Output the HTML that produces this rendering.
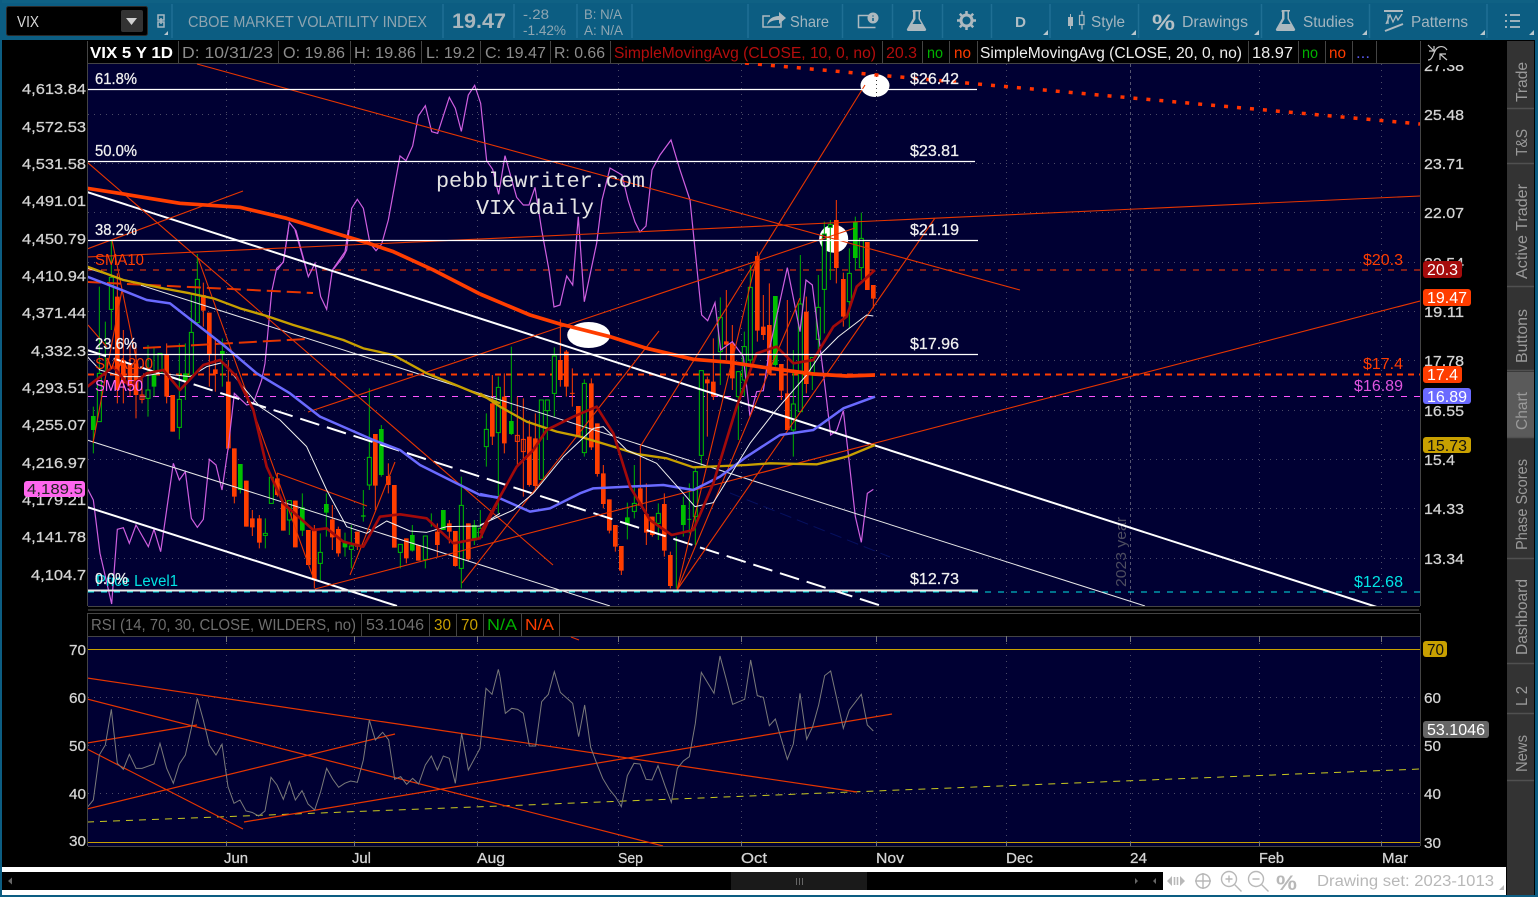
<!DOCTYPE html>
<html lang="en"><head><meta charset="utf-8"><title>VIX chart</title>
<style>
html,body{margin:0;padding:0;background:#000;width:1538px;height:897px;overflow:hidden}
svg{display:block}
text{font-family:"Liberation Sans",sans-serif;font-size:15px}
.ax{fill:#d4d4d4;stroke:#d4d4d4;stroke-width:.25px}
.tb{fill:#a3b5bf;font-size:16px}
.tn{fill:#8fa6b2;font-size:14px}
.hd{fill:#8c8c8c;font-size:15.5px}
.fb{fill:#f0f0f0;font-size:15.5px;stroke:#f0f0f0;stroke-width:.25px}
.tab{fill:#9a9a9a;font-size:15.5px}
.tag{fill:#fff;font-size:15.5px}
.icf{fill:#adb9bf}
.ics{fill:none;stroke:#adb9bf;stroke-width:1.5}
.sep{stroke:#1f6f94;stroke-width:1.5}
.hs{stroke:#444;stroke-width:1}
.tri{fill:#b8c6cd}
</style></head><body>
<svg width="1538" height="897" viewBox="0 0 1538 897" xmlns="http://www.w3.org/2000/svg">
<defs><clipPath id="c1"><rect x="88" y="63" width="1332" height="543"/></clipPath>
<clipPath id="c2"><rect x="88" y="636" width="1332" height="210"/></clipPath>
<clipPath id="c3"><rect x="1421" y="65" width="85" height="20"/></clipPath></defs>
<rect width="1538" height="897" fill="#000"/>
<rect width="1538" height="40" fill="#0c5d82"/>
<rect width="1538" height="3" fill="#0f6184"/>
<rect x="0" y="0" width="2" height="897" fill="#0c5d82"/>
<rect x="1535" y="0" width="3" height="897" fill="#0c5d82"/>
<rect x="0" y="895" width="1538" height="2" fill="#0c5d82"/>

<!-- toolbar -->
<rect x="6.5" y="6.5" width="141" height="29" rx="2" fill="#000" stroke="#2a2a2a"/>
<text x="17" y="27" fill="#d8d8d8" textLength="22" lengthAdjust="spacingAndGlyphs" style="font-size:15.5px">VIX</text>
<rect x="121" y="10" width="22" height="22" rx="2" fill="#333"/>
<path d="M126 18h11l-5.500 7z" fill="#d0d0d0"/>
<path d="M158 15h6v5h-6zM158 22h6v5h-6z" fill="none" stroke="#a7b8c1" stroke-width="1.500"/>
<path d="M161 18v6" stroke="#a7b8c1" stroke-width="1.500"/>
<path d="M168 35h-4l4-4z" class="tri"/>
<path class="sep" d="M172 4V38M443 4V38M514 4V38M577 4V38M632 4V38M748 4V38M842.500 4V38M892.500 4V38M942.500 4V38M991.500 4V38M1050 4V38M1138.500 4V38M1261.500 4V38M1369.500 4V38M1487 4V38"/>
<text x="188" y="27" class="tb" textLength="239" lengthAdjust="spacingAndGlyphs" style="fill:#8ea4b0">CBOE MARKET VOLATILITY INDEX</text>
<text x="452" y="28" textLength="54" lengthAdjust="spacingAndGlyphs" style="fill:#a9b6bd;font-size:21px;font-weight:bold">19.47</text>
<text x="523" y="19" class="tn" textLength="26" lengthAdjust="spacingAndGlyphs">-.28</text>
<text x="523" y="35" class="tn" textLength="43" lengthAdjust="spacingAndGlyphs">-1.42%</text>
<text x="584" y="19" class="tn" textLength="38" lengthAdjust="spacingAndGlyphs">B: N/A</text>
<text x="584" y="35" class="tn" textLength="39" lengthAdjust="spacingAndGlyphs">A: N/A</text>
<!-- share -->
<path class="ics" d="M770 16h-7v11h18v-6"/>
<path class="icf" d="M767 25c1-6 6-9 12-9v-4l7 6-7 6v-4c-5 0-9 1-12 5z"/>
<text x="790" y="27" class="tb" textLength="39" lengthAdjust="spacingAndGlyphs">Share</text>
<!-- notebook -->
<path class="ics" d="M875 27.500h-16.500v-12h12M858.500 27.500h17"/>
<circle cx="873" cy="18" r="5.500" class="icf"/><path d="M873 15.500v1M873 18v3" stroke="#0c5d82" stroke-width="1.500"/>
<!-- flask -->
<path class="icf" d="M913 10h8v1.500h-1v7l6 10.500c.5 1-.3 2-1.500 2h-16c-1.200 0-2-1-1.500-2l6-10.500v-7h-1z"/>
<path d="M915.500 11.500h3v7.500l3 5h-9l3-5z" fill="#0c5d82"/>
<!-- gear -->
<circle cx="966.500" cy="20.500" r="5.500" fill="none" stroke="#adb9bf" stroke-width="3"/>
<path class="ics" d="M966.500 11v4M966.500 26v4M957 20.500h4M972 20.500h4M959.800 13.800l2.800 2.800M970.400 24.400l2.800 2.800M959.800 27.200l2.800-2.800M970.400 16.600l2.800-2.800" style="stroke-width:2.500"/>
<text x="1015" y="27" textLength="11" lengthAdjust="spacingAndGlyphs" style="fill:#b0bdc4;font-size:15px;font-weight:bold">D</text>
<!-- style -->
<path class="icf" d="M1068 17h5v9h-5zM1070 14h1v15h-1z"/>
<path class="ics" d="M1079.500 15.500h4.500v9h-4.500zM1082 11v4M1082 24.500v5" style="stroke-width:1.200"/>
<text x="1091" y="27" class="tb" textLength="34" lengthAdjust="spacingAndGlyphs">Style</text>
<!-- % -->
<text x="1152" y="30" textLength="23" lengthAdjust="spacingAndGlyphs" style="fill:#b6c0c5;font-size:22px;font-weight:bold">%</text>
<text x="1182" y="27" class="tb" textLength="66" lengthAdjust="spacingAndGlyphs">Drawings</text>
<!-- flask 2 -->
<path class="icf" d="M1282 10h8v1.500h-1v7l6 10.500c.5 1-.3 2-1.500 2h-16c-1.200 0-2-1-1.500-2l6-10.500v-7h-1z"/>
<path d="M1284.500 11.500h3v7.500l3 5h-9l3-5z" fill="#0c5d82"/>
<text x="1303" y="27" class="tb" textLength="51" lengthAdjust="spacingAndGlyphs">Studies</text>
<!-- patterns -->
<path class="ics" d="M1384 11h19M1385 31l18-7" style="stroke-width:2"/>
<path class="ics" d="M1386 24l4-9 3 7 3-6 2 4 4-6M1388 14v10" style="stroke-width:1.300"/>
<text x="1411" y="27" class="tb" textLength="57" lengthAdjust="spacingAndGlyphs">Patterns</text>
<!-- list -->
<path d="M1505 15h2M1505 21h2M1505 27h2M1510 15h10M1510 21h10M1510 27h10" stroke="#b0bdc4" stroke-width="1.800"/>
<path class="tri" d="M1048 35h-5l5-5zM1136 35h-5l5-5zM1259 35h-5l5-5zM1367 35h-5l5-5zM1485 35h-5l5-5zM1534 35h-5l5-5z"/>

<!-- chart header -->
<path class="hs" d="M88 63.500H1420M87.500 41V606M178.500 41V63M278.500 41V63M350.500 41V63M421.500 41V63M480.500 41V63M550.500 41V63M610.500 41V63M882.500 41V63M922.500 41V63M949.500 41V63M977.500 41V63M1248.500 41V63M1298.500 41V63M1325.500 41V63M1352.500 41V63M1376.500 41V63M1420.500 41V606M88 606.500H1420"/>
<text x="90" y="58" textLength="83" lengthAdjust="spacingAndGlyphs" style="fill:#fff;font-size:15.500px;font-weight:bold">VIX 5 Y 1D</text>
<text x="182" y="58" class="hd" textLength="91" lengthAdjust="spacingAndGlyphs">D: 10/31/23</text>
<text x="283" y="58" class="hd" textLength="62" lengthAdjust="spacingAndGlyphs">O: 19.86</text>
<text x="354" y="58" class="hd" textLength="62" lengthAdjust="spacingAndGlyphs">H: 19.86</text>
<text x="426" y="58" class="hd" textLength="49" lengthAdjust="spacingAndGlyphs">L: 19.2</text>
<text x="485" y="58" class="hd" textLength="61" lengthAdjust="spacingAndGlyphs">C: 19.47</text>
<text x="554" y="58" class="hd" textLength="51" lengthAdjust="spacingAndGlyphs">R: 0.66</text>
<text x="614" y="58" class="hd" textLength="262" lengthAdjust="spacingAndGlyphs" style="fill:#b30d0d">SimpleMovingAvg (CLOSE, 10, 0, no)</text>
<text x="886" y="58" class="hd" textLength="31" lengthAdjust="spacingAndGlyphs" style="fill:#b30d0d">20.3</text>
<text x="927" y="58" class="hd" textLength="16" lengthAdjust="spacingAndGlyphs" style="fill:#00b000">no</text>
<text x="954" y="58" class="hd" textLength="17" lengthAdjust="spacingAndGlyphs" style="fill:#ff3d00">no</text>
<text x="980" y="58" class="hd" textLength="262" lengthAdjust="spacingAndGlyphs" style="fill:#eee">SimpleMovingAvg (CLOSE, 20, 0, no)</text>
<text x="1252" y="58" class="hd" textLength="41" lengthAdjust="spacingAndGlyphs" style="fill:#eee">18.97</text>
<text x="1302" y="58" class="hd" textLength="16" lengthAdjust="spacingAndGlyphs" style="fill:#00b000">no</text>
<text x="1329" y="58" class="hd" textLength="17" lengthAdjust="spacingAndGlyphs" style="fill:#ff3d00">no</text>
<text x="1356" y="58" class="hd" textLength="14" lengthAdjust="spacingAndGlyphs" style="fill:#5a5aee">...</text>

<!-- main plot -->
<rect x="88" y="64" width="1332" height="542" fill="#000033"/>
<g clip-path="url(#c1)">
<path d="M88 114.500H1420M88 163.500H1420M88 212.500H1420M88 262.500H1420M88 311.500H1420M88 360.500H1420M88 410.500H1420M88 459.500H1420M88 508.500H1420M88 558.500H1420M226.500 64V606M354.500 64V606M477.500 64V606M618.500 64V606M741.500 64V606M876.500 64V606M1006.500 64V606M1259.500 64V606M1381.500 64V606" stroke="#4a4a66" stroke-width="1" stroke-dasharray="1 5" fill="none"/>
<path d="M1130.500 64V606" stroke="#555570" stroke-dasharray="3 3"/>
<text transform="translate(1126,587) rotate(-90)" textLength="70" lengthAdjust="spacingAndGlyphs" style="fill:#4d4d60;font-size:15px">2023 year</text>
<ellipse cx="588.700" cy="335" rx="21.500" ry="13" fill="#fff"/>
<ellipse cx="833.700" cy="238.700" rx="14.500" ry="14" fill="#fff"/>
<ellipse cx="875" cy="85.500" rx="14.500" ry="11.500" fill="#fff"/>
<path d="M876.500 76V97" stroke="#333" stroke-dasharray="1 3"/>

<path d="M88 270H1420" stroke="#ff3d00" stroke-width="1" stroke-dasharray="6 7" fill="none"/>
<path d="M88 374.500H1420" stroke="#ff3d00" stroke-width="2" stroke-dasharray="6 5" fill="none"/>
<path d="M88 396.500H1420" stroke="#ff55ff" stroke-width="1" stroke-dasharray="6 7" fill="none"/>
<path d="M88 592H1420" stroke="#00e5e5" stroke-width="1" stroke-dasharray="6 7" fill="none"/>

<!-- candles part 1 -->
<g transform="translate(80 230) scale(.33333)" fill="none">
<path stroke="#00b000" stroke-width="3" d="M40 530V670M58 170V575M76 275V430M94 30V300M204 345V560M222 350V500M240 370V430M298 340V628M316 340V510M334 190V437M352 72V280M427 325V470M481 702V790M556 865V955M574 740V820M628 812V915M667 790V918M721 910V1050M739 790V920M795 908V980M814 885V1015M850 780V875M868 475V780M904 585V740M961 943V1015M997 885V965M1036 918V1015M1054 850V890M1090 840V900M1144 740V1075M1183 870V945M1201 840V925"/>
<path stroke="#ff3d00" stroke-width="3" d="M112 130V520M130 300V520M150 340V500M168 340V565M186 440V520M260 340V520M278 495V605M370 158V290M388 248V470M406 330V485M445 390V660M463 655V820M499 752V890M517 840V918M538 855V955M592 730V800M610 820V902M646 812V952M685 900V1005M703 885V1075M757 825V960M775 890V980M832 905V960M886 612V840M925 700V790M943 765V953M979 925V1000M1015 945V992M1072 880V980M1108 870V940M1126 903V1010M1165 880V995"/>
<path stroke="#ff3d00" stroke-width="14" d="M112 200V480M130 390V460M150 400V470M168 400V495M260 375V500M278 495V605M370 195V242M388 248V372M406 418V432M445 455V655M463 655V800M499 752V890M517 865V892M538 865V938M592 745V795M610 820V902M646 812V952M685 900V1005M703 900V1050M757 868V922M775 897V970M832 905V950M886 612V767M925 738V765M943 765V953M979 925V985M1015 945V992M1072 905V945M1108 880V905M1126 903V1008M1165 880V988"/>
<path stroke="#00c000" stroke-width="14" d="M40 558V600M222 435V470M316 430V455M427 363V375M481 702V780M667 832V902M739 822V848M795 935V952M850 856V860M904 597V735M997 915V962M1090 840V900M1183 885V932"/>
<path stroke="#00c000" stroke-width="3" fill="#000033" d="M52 430h12v145h-12zM88 142h12v96h-12zM198 480h12v25h-12zM234 370h12v60h-12zM292 508h12v84h-12zM328 307h12v130h-12zM346 148h12v130h-12zM550 910h12v6h-12zM568 742h12v78h-12zM622 812h12v58h-12zM715 967h12v33h-12zM808 948h12v10h-12zM862 682h12v83h-12zM955 943h12v24h-12zM1030 918h12v70h-12zM1138 826h12v189h-12zM1195 895h12v27h-12z"/>
<path stroke="#ff3d00" stroke-width="3" d="M180 495h12v13h-12z"/>
</g>
<!-- candles part 2 -->
<g transform="translate(480 200) scale(.33333)" fill="none">
<path stroke="#00b000" stroke-width="3" d="M19 640V800M55 530V940M94 440V705M184 600V838M202 600V720M223 442V650M313 538V770M442 908V1018M463 795V955M535 910V1020M589 1010V1165M610 890V1010M628 850V1000M646 800V1035M664 512V800M721 292V555M775 515V720M793 395V590M811 195V500M886 288V500M940 450V770M961 165V635M997 472V570M1015 225V470M1033 65V400M1051 60V240M1108 145V385M1126 50V210M1144 38V240"/>
<path stroke="#ff3d00" stroke-width="3" d="M37 525V735M73 520V760M112 590V800M130 595V890M148 660V860M166 640V875M241 358V560M259 450V590M277 505V620M295 618V708M334 535V750M352 670V830M370 795V925M388 898V1000M406 975V1055M424 1038V1125M481 738V917M499 850V1035M517 950V1010M553 880V1070M571 1055V1165M682 530V710M700 415V600M739 270V480M757 375V570M832 155V425M850 285V420M868 250V525M904 492V600M922 300V690M979 290V580M1069 0V250M1090 218V380M1162 126V270M1180 255V325"/>
<path stroke="#ff3d00" stroke-width="14" d="M37 610V710M73 590V730M148 710V855M166 715V858M241 480V540M259 455V560M295 618V708M334 550V742M352 670V822M370 820V912M388 898V992M406 975V1040M424 1038V1112M481 865V917M499 942V998M517 950V1005M553 912V1052M571 1065V1158M682 538V550M700 545V590M739 424V434M757 430V535M832 168V392M850 380V405M868 375V520M904 492V572M922 580V690M979 335V552M1069 60V204M1090 237V350M1162 126V270M1180 255V296"/>
<path stroke="#00c000" stroke-width="14" d="M94 663V702M442 952V975M610 915V975M886 288V495M1126 65V174"/>
<path stroke="#00c000" stroke-width="3" fill="#000033" d="M13 688h12v52h-12zM49 562h12v136h-12zM178 600h12v238h-12zM196 600h12v32h-12zM217 468h12v112h-12zM307 550h12v208h-12zM457 910h12v24h-12zM529 940h12v30h-12zM640 815h12v135h-12zM658 512h12v254h-12zM715 352h12v103h-12zM769 515h12v75h-12zM787 440h12v100h-12zM805 262h12v218h-12zM934 612h12v78h-12zM955 312h12v323h-12zM991 472h12v46h-12zM1009 322h12v96h-12zM1027 102h12v166h-12zM1045 74h12v8h-12zM1102 220h12v85h-12zM1138 115h12v88h-12z"/>
<path stroke="#ff3d00" stroke-width="3" d="M106 706h12v18h-12zM124 718h12v37h-12z"/>
<path stroke="#ff3d00" stroke-width="3" d="M270 580h14"/>
<path stroke="#00c000" stroke-width="3" d="M622 958h12"/>
</g>

<!-- purple -->
<g fill="none" stroke="#cf5fe0" stroke-width="1.200">
<path transform="translate(80 230) scale(.33333)" stroke-width="3.600" d="M22 775L40 810 60 970 95 1122 112 898 130 893 148 940 168 885 205 950 222 898 242 965 280 700 298 750 316 725 334 865 352 892 370 868 388 688 408 705 426 780 445 650 463 490 500 525 520 520 545 450 555 400 575 185 590 115 610 97 625 0M645 0L685 140 705 100 722 200 740 238 757 120 795 65 805 0"/>
<path transform="translate(80 40) scale(.33333)" stroke-width="3.600" d="M592 690L610 665 628 547 648 572 680 690M760 688L790 650 800 630 815 505 832 478 850 505 870 610 888 632 905 612 925 540 960 348 978 362 998 318 1015 228 1036 197 1055 275 1073 280 1108 172 1126 205 1144 274 1165 165 1184 136 1202 190 1220 362 1238 388 1256 463 1275 347 1310 472 1330 495 1347 495 1365 442 1385 570 1407 690"/>
<path d="M549 270L554 307 560 305 566.700 276 572.700 285 578.300 216.700 584.300 301.700 596.700 243 602 200 610 168 622 175 628 200 635 222 640 232 646 226 652 170 660 155 671 140 680 170 690 200"/>
<path transform="translate(480 200) scale(.33333)" stroke-width="3.600" d="M630 0L665 345 683 362 705 308 722 450 757 425 790 470 810 650 830 575 850 572 870 440 922 203 960 395 978 240 997 255 1015 400 1035 560 1052 705 1070 692 1090 632 1108 790 1126 950 1144 1027 1162 880 1180 868"/>
</g>

<!-- channels -->
<g fill="none" stroke="#fff">
<path stroke-width="2" d="M87 192L1380 608"/>
<path stroke-width="2" d="M87 507L397 606"/>
<path stroke-width="2" d="M87 350L882 606" stroke-dasharray="20 8"/>
<path stroke-width="1" stroke="#e8e8e8" d="M87 440L610 606M87 268L1145 606"/>
</g>
<path d="M730 493L890 557" stroke="#061060" stroke-width="1" fill="none" stroke-dasharray="12 6"/>

<!-- thin red trendlines -->
<g fill="none" stroke="#e63500" stroke-width="1.100">
<path d="M197 64L1020 290M87 249L243 191M87 257L1420 196M87 162L553 565M198 258L313 577M277 473L367 506M350 575L395 462M308 412L855 228M315 589L1420 301M462 583L659 331M640 447L865 85M677 590L757 257M677 590L800 298M677 590L935 218M93 443L122 290M112 240L137 363M88 325L107 347"/>
</g>

<!-- orange dashed -->
<g fill="none" stroke="#e63500">
<path stroke-width="2" stroke-dasharray="14 6" d="M87 282L313 293"/>
<path stroke-width="2" stroke-dasharray="18 6" d="M143 348L307 339"/>
<path stroke="#ff3300" stroke-width="3.500" stroke-dasharray="4 9" d="M745 63L1420 124"/>
</g>

<!-- moving averages -->
<g fill="none" stroke-linejoin="round">
<g transform="translate(80 230) scale(.33333)">
<path stroke="#c8a000" stroke-width="7" d="M22 110L130 150 250 175 330 190 400 205 480 235 560 258 640 285 790 330 850 355 940 375 1040 430 1120 462 1260 520"/>
<path stroke="#6a6aff" stroke-width="7.500" d="M22 140L100 170 200 210 270 220 340 275 430 345 530 430 630 490 720 560 880 630 960 660 1020 705 1140 765 1200 795 1260 803"/>
<path stroke="#f0f0f0" stroke-width="3" d="M22 380L60 420 130 440 180 440 240 430 330 440 380 410 430 397 480 460 540 530 600 570 680 650 740 780 800 890 860 910 920 873 990 903 1040 907 1100 890 1200 888 1260 850"/>
<path stroke="#a30a0a" stroke-width="8" d="M22 470L100 410 150 470 200 430 250 420 300 480 370 405 420 390 470 440 520 540 560 710 610 820 700 900 740 895 790 935 850 950 900 860 960 853 1040 865 1120 940 1200 925 1260 800"/>
</g>
<g transform="translate(480 200) scale(.33333)">
<path stroke="#c8a000" stroke-width="7" d="M0 580L60 620 140 665 230 695 300 710 400 740 470 762 560 775 640 802 800 795 870 790 1010 793 1100 770 1185 735"/>
<path stroke="#6a6aff" stroke-width="7.500" d="M0 882L60 895 150 935 210 925 300 880 340 865 550 855 640 870 720 830 800 770 900 705 1000 690 1090 625 1185 590"/>
<path stroke="#f0f0f0" stroke-width="3" d="M0 975L100 930 160 880 250 770 340 685 370 680 440 750 530 790 610 880 645 920 700 908 810 730 880 640 980 525 1020 465 1075 410 1160 345 1180 348"/>
<path stroke="#a30a0a" stroke-width="8" d="M0 1000L60 890 110 800 160 750 200 690 280 650 350 620 400 700 450 860 510 960 575 1005 640 990 700 850 770 620 830 460 890 440 940 490 1000 480 1060 380 1100 350 1130 260 1185 210"/>
<path stroke="#ff3d00" stroke-width="11" d="M0 282L150 345 240 372 390 410 500 445 640 478 750 487 850 502 1000 522 1100 528 1185 525"/>
</g>
<path transform="translate(80 40) scale(.33333)" stroke="#ff3d00" stroke-width="11" d="M22 445L130 462 300 490 480 502 620 535 760 578 860 608 940 635 1060 690 1200 762"/>
</g>

<!-- fib -->
<path d="M88 89.500H977M88 161.500H975M88 240.500H978M88 354.500H978" stroke="#fff" stroke-width="1.200" fill="none"/>
<path d="M88 590.500H978" stroke="#e8e8e8" stroke-width="2" fill="none"/>
<text x="95" y="84" class="fb" textLength="42" lengthAdjust="spacingAndGlyphs">61.8%</text>
<text x="95" y="156" class="fb" textLength="42" lengthAdjust="spacingAndGlyphs">50.0%</text>
<text x="95" y="235" class="fb" textLength="42" lengthAdjust="spacingAndGlyphs">38.2%</text>
<text x="95" y="349" class="fb" textLength="42" lengthAdjust="spacingAndGlyphs">23.6%</text>
<text x="910" y="84" class="fb" textLength="49" lengthAdjust="spacingAndGlyphs">$26.42</text>
<text x="910" y="156" class="fb" textLength="49" lengthAdjust="spacingAndGlyphs">$23.81</text>
<text x="910" y="235" class="fb" textLength="49" lengthAdjust="spacingAndGlyphs">$21.19</text>
<text x="910" y="349" class="fb" textLength="49" lengthAdjust="spacingAndGlyphs">$17.96</text>
<text x="910" y="584" class="fb" textLength="49" lengthAdjust="spacingAndGlyphs">$12.73</text>
<text x="95" y="265" textLength="49" lengthAdjust="spacingAndGlyphs" style="fill:#ff3d00;font-size:15.500px">SMA10</text>
<text x="95" y="369" textLength="58" lengthAdjust="spacingAndGlyphs" style="fill:#ff3d00;font-size:15.500px">SMA200</text>
<text x="95" y="391" textLength="48" lengthAdjust="spacingAndGlyphs" style="fill:#ff66ee;font-size:15.500px">SMA50</text>
<text x="96" y="586" textLength="82" lengthAdjust="spacingAndGlyphs" style="fill:#00e5e5;font-size:15.500px">Price Level1</text>
<text x="95" y="584" class="fb" textLength="33" lengthAdjust="spacingAndGlyphs">0.0%</text>
<text x="1363" y="265" textLength="40" lengthAdjust="spacingAndGlyphs" style="fill:#ff3d00;font-size:15.500px">$20.3</text>
<text x="1363" y="369" textLength="40" lengthAdjust="spacingAndGlyphs" style="fill:#ff3d00;font-size:15.500px">$17.4</text>
<text x="1354" y="391" textLength="49" lengthAdjust="spacingAndGlyphs" style="fill:#e055e0;font-size:15.500px">$16.89</text>
<text x="1354" y="587" textLength="49" lengthAdjust="spacingAndGlyphs" style="fill:#00e5e5;font-size:15.500px">$12.68</text>
<text x="436" y="187" textLength="209" lengthAdjust="spacingAndGlyphs" style="font-family:'Liberation Mono',monospace;font-size:21px;fill:#e4e4e4">pebblewriter.com</text>
<text x="476" y="214" textLength="118" lengthAdjust="spacingAndGlyphs" style="font-family:'Liberation Mono',monospace;font-size:21px;fill:#e4e4e4">VIX daily</text>
</g>

<!-- left axis -->
<g text-anchor="end">
<text x="86" y="94" class="ax" textLength="64" lengthAdjust="spacingAndGlyphs">4,613.84</text>
<text x="86" y="132" class="ax" textLength="64" lengthAdjust="spacingAndGlyphs">4,572.53</text>
<text x="86" y="169" class="ax" textLength="64" lengthAdjust="spacingAndGlyphs">4,531.58</text>
<text x="86" y="206" class="ax" textLength="64" lengthAdjust="spacingAndGlyphs">4,491.01</text>
<text x="86" y="244" class="ax" textLength="64" lengthAdjust="spacingAndGlyphs">4,450.79</text>
<text x="86" y="281" class="ax" textLength="64" lengthAdjust="spacingAndGlyphs">4,410.94</text>
<text x="86" y="318" class="ax" textLength="64" lengthAdjust="spacingAndGlyphs">4,371.44</text>
<text x="86" y="356" class="ax" textLength="55" lengthAdjust="spacingAndGlyphs">4,332.3</text>
<text x="86" y="393" class="ax" textLength="64" lengthAdjust="spacingAndGlyphs">4,293.51</text>
<text x="86" y="430" class="ax" textLength="64" lengthAdjust="spacingAndGlyphs">4,255.07</text>
<text x="86" y="468" class="ax" textLength="64" lengthAdjust="spacingAndGlyphs">4,216.97</text>
<text x="86" y="505" class="ax" textLength="64" lengthAdjust="spacingAndGlyphs">4,179.21</text>
<text x="86" y="542" class="ax" textLength="64" lengthAdjust="spacingAndGlyphs">4,141.78</text>
<text x="86" y="580" class="ax" textLength="55" lengthAdjust="spacingAndGlyphs">4,104.7</text>
</g>
<rect x="24" y="481" width="61" height="16" rx="3" fill="#ff66ee"/>
<text x="27" y="494" textLength="56" lengthAdjust="spacingAndGlyphs" style="fill:#222;font-size:15px">4,189.5</text>

<!-- right axis -->
<g clip-path="url(#c3)"><text x="1424" y="71" class="ax" textLength="40" lengthAdjust="spacingAndGlyphs">27.38</text></g>
<text x="1424" y="120" class="ax" textLength="40" lengthAdjust="spacingAndGlyphs">25.48</text>
<text x="1424" y="169" class="ax" textLength="40" lengthAdjust="spacingAndGlyphs">23.71</text>
<text x="1424" y="218" class="ax" textLength="40" lengthAdjust="spacingAndGlyphs">22.07</text>
<text x="1424" y="268" class="ax" textLength="40" lengthAdjust="spacingAndGlyphs">20.54</text>
<text x="1424" y="317" class="ax" textLength="40" lengthAdjust="spacingAndGlyphs">19.11</text>
<text x="1424" y="366" class="ax" textLength="40" lengthAdjust="spacingAndGlyphs">17.78</text>
<text x="1424" y="416" class="ax" textLength="40" lengthAdjust="spacingAndGlyphs">16.55</text>
<text x="1424" y="465" class="ax" textLength="31" lengthAdjust="spacingAndGlyphs">15.4</text>
<text x="1424" y="514" class="ax" textLength="40" lengthAdjust="spacingAndGlyphs">14.33</text>
<text x="1424" y="564" class="ax" textLength="40" lengthAdjust="spacingAndGlyphs">13.34</text>
<path d="M1428 45l6 6M1434 46v5h-5M1428 60c6 0 5-11 11-13 3-1 6 0 8 3M1447 60l-7-6M1440 60v-6h6" fill="none" stroke="#c8c8c8" stroke-width="1.200"/>
<rect x="1423" y="261" width="39" height="17" rx="3" fill="#a50c0c"/><text x="1427" y="275" class="tag" textLength="31" lengthAdjust="spacingAndGlyphs">20.3</text>
<rect x="1423" y="289" width="48" height="17" rx="3" fill="#ff3d00"/><text x="1427" y="303" class="tag" textLength="40" lengthAdjust="spacingAndGlyphs">19.47</text>
<rect x="1423" y="366" width="39" height="17" rx="3" fill="#ff3d00"/><text x="1427" y="380" class="tag" textLength="31" lengthAdjust="spacingAndGlyphs">17.4</text>
<rect x="1423" y="388" width="48" height="16" rx="3" fill="#6a6aff"/><text x="1427" y="402" class="tag" textLength="40" lengthAdjust="spacingAndGlyphs">16.89</text>
<rect x="1423" y="437" width="48" height="16" rx="3" fill="#c8a000"/><text x="1427" y="451" class="tag" textLength="40" lengthAdjust="spacingAndGlyphs" style="fill:#111">15.73</text>

<!-- divider -->
<rect x="88" y="609" width="1331" height="2" fill="#2e2e2e"/>

<!-- RSI -->
<path class="hs" d="M88 613.500H1420M88 636.500H1420M87.500 613V846M1420.500 613V846M88 846.500H1420M361.500 613V636M429.500 613V636M456.500 613V636M483.500 613V636M521.500 613V636M559.500 613V636"/>
<text x="91" y="630" textLength="265" lengthAdjust="spacingAndGlyphs" style="fill:#6e6e6e;font-size:15.500px">RSI (14, 70, 30, CLOSE, WILDERS, no)</text>
<text x="366" y="630" textLength="58" lengthAdjust="spacingAndGlyphs" style="fill:#6e6e6e;font-size:15.500px">53.1046</text>
<text x="434" y="630" textLength="17" lengthAdjust="spacingAndGlyphs" style="fill:#c8a000;font-size:15.500px">30</text>
<text x="461" y="630" textLength="17" lengthAdjust="spacingAndGlyphs" style="fill:#c8a000;font-size:15.500px">70</text>
<text x="487" y="630" textLength="30" lengthAdjust="spacingAndGlyphs" style="fill:#00b000;font-size:15.500px">N/A</text>
<text x="525" y="630" textLength="29" lengthAdjust="spacingAndGlyphs" style="fill:#ff3d00;font-size:15.500px">N/A</text>
<rect x="88" y="637" width="1332" height="209" fill="#000033"/>
<g clip-path="url(#c2)">
<path d="M88 697.500H1420M88 745.500H1420M88 793.500H1420M226.500 637V846M354.500 637V846M477.500 637V846M618.500 637V846M741.500 637V846M876.500 637V846M1006.500 637V846M1130.500 637V846M1259.500 637V846M1381.500 637V846" stroke="#4a4a66" stroke-dasharray="1 5" fill="none"/>
<path d="M88 649.500H1420M88 842.500H1420" stroke="#c8a000" stroke-width="1" fill="none"/>
<path d="M87 822L500 806 1000 786 1420 769" stroke="#c8c820" stroke-width="1" stroke-dasharray="7 6" fill="none"/>
<g fill="none" stroke="#e63500" stroke-width="1.200">
<path d="M87 678L857 792M87 699L663 846M87 743L197 725M87 749L243 829M87 809L395 734M244 822L892 714M571 637L579 640"/>
</g>
<g fill="none" stroke="#7a7a7a" stroke-width="1">
<path transform="translate(0 600) scale(.33333)" stroke-width="3" d="M262 622L280 600 298 465 316 435 334 328 352 490 370 508 388 463 408 505 426 505 462 492 480 430 500 505 520 550 538 492 556 465 574 385 592 295 610 360 628 435 648 465 666 433 684 560 702 610 720 600 738 633 756 637 776 648 795 633 813 532 831 555 850 598 868 545 886 600 906 572 924 612 944 630 962 575 980 505 998 537 1016 562 1034 550 1052 543 1072 547 1090 480 1108 360 1126 420 1148 397 1166 420 1184 538 1202 530 1220 553 1238 535 1256 552 1276 495 1294 468 1312 510 1330 468 1348 475 1366 550 1385 400 1405 510 1440 445 1458 265 1476 283 1495 208 1500 230"/>
<path transform="translate(500 600) scale(.33333)" stroke-width="3" d="M0 230L16 340 35 325 53 328 70 340 88 438 107 438 125 305 145 283 163 215 181 277 218 310 236 410 254 315 272 442 290 490 308 535 328 568 346 590 364 620 382 527 402 490 420 492 438 538 456 540 474 497 496 560 514 607 532 505 550 483 568 470 586 370 604 217 642 280 660 168 678 235 698 313 734 298 752 180 772 287 790 292 808 377 826 357 862 478 880 432 900 280 920 418 938 380 956 315 974 227 992 213 1030 385 1048 330 1084 283 1102 375 1120 393"/>
</g>
</g>
<path d="M226.500 636v6M354.500 636v6M477.500 636v6M618.500 636v6M741.500 636v6M876.500 636v6M1006.500 636v6M1130.500 636v6M1259.500 636v6M1381.500 636v6M226.500 842v4M354.500 842v4M477.500 842v4M618.500 842v4M741.500 842v4M876.500 842v4M1006.500 842v4M1130.500 842v4M1259.500 842v4M1381.500 842v4" stroke="#777" fill="none"/>
<g>
<text x="69" y="655" class="ax" textLength="17" lengthAdjust="spacingAndGlyphs">70</text>
<text x="69" y="703" class="ax" textLength="17" lengthAdjust="spacingAndGlyphs">60</text>
<text x="69" y="751" class="ax" textLength="17" lengthAdjust="spacingAndGlyphs">50</text>
<text x="69" y="799" class="ax" textLength="17" lengthAdjust="spacingAndGlyphs">40</text>
<text x="69" y="846" class="ax" textLength="17" lengthAdjust="spacingAndGlyphs">30</text>
<text x="1424" y="703" class="ax" textLength="17" lengthAdjust="spacingAndGlyphs">60</text>
<text x="1424" y="751" class="ax" textLength="17" lengthAdjust="spacingAndGlyphs">50</text>
<text x="1424" y="799" class="ax" textLength="17" lengthAdjust="spacingAndGlyphs">40</text>
<text x="1424" y="848" class="ax" textLength="17" lengthAdjust="spacingAndGlyphs">30</text>
</g>
<rect x="1423" y="641" width="24" height="16" rx="3" fill="#c8a000"/><text x="1427" y="655" class="tag" textLength="17" lengthAdjust="spacingAndGlyphs" style="fill:#111">70</text>
<rect x="1423" y="721" width="66" height="17" rx="3" fill="#666"/><text x="1427" y="735" class="tag" textLength="58" lengthAdjust="spacingAndGlyphs">53.1046</text>

<!-- time axis -->
<text x="224" y="863" class="ax" textLength="24" lengthAdjust="spacingAndGlyphs">Jun</text>
<text x="352" y="863" class="ax" textLength="19" lengthAdjust="spacingAndGlyphs">Jul</text>
<text x="477" y="863" class="ax" textLength="28" lengthAdjust="spacingAndGlyphs">Aug</text>
<text x="618" y="863" class="ax" textLength="25" lengthAdjust="spacingAndGlyphs">Sep</text>
<text x="741" y="863" class="ax" textLength="26" lengthAdjust="spacingAndGlyphs">Oct</text>
<text x="876" y="863" class="ax" textLength="28" lengthAdjust="spacingAndGlyphs">Nov</text>
<text x="1006" y="863" class="ax" textLength="27" lengthAdjust="spacingAndGlyphs">Dec</text>
<text x="1130" y="863" class="ax" textLength="17" lengthAdjust="spacingAndGlyphs">24</text>
<text x="1259" y="863" class="ax" textLength="25" lengthAdjust="spacingAndGlyphs">Feb</text>
<text x="1382" y="863" class="ax" textLength="26" lengthAdjust="spacingAndGlyphs">Mar</text>

<!-- bottom bar -->
<rect x="2" y="867" width="1504" height="28" fill="#fff"/>
<rect x="2" y="872" width="1161" height="18" fill="#000"/>
<rect x="731" y="872" width="136" height="18" fill="#1a1a1a"/>
<path d="M796.500 878v7M799.500 878v7M802.500 878v7" stroke="#666" fill="none"/>
<path d="M8 881l4-3.500v7zM1138 881l-3-3v6zM1153 881l3-3v6z" fill="#666"/>
<g fill="none" stroke="#b8b8b8" stroke-width="1.400">
<path d="M1167 881l5-5v10zM1185 881l-5-5v10z" fill="#b8b8b8" stroke="none"/>
<path d="M1174.500 877v8M1177.500 877v8" stroke-width="1.600"/>
<circle cx="1203" cy="881" r="7"/><path d="M1195 881h16M1203 873v16"/>
<circle cx="1229" cy="879" r="7.500"/><path d="M1225.500 879h7M1229 875.500v7M1234.500 884.500l7 7"/>
<circle cx="1256" cy="879" r="7.500"/><path d="M1252.500 879h7M1261.500 884.500l7 7"/>
</g>
<text x="1276" y="890" textLength="21" lengthAdjust="spacingAndGlyphs" style="fill:#b8b8b8;font-size:21px;font-weight:bold">%</text>
<text x="1317" y="886" textLength="177" lengthAdjust="spacingAndGlyphs" style="fill:#b8b8b8;font-size:15.500px">Drawing set: 2023-1013</text>
<path d="M1504 890h-5l5-5z" fill="#bbb"/>

<!-- right tabs -->
<rect x="1507" y="41" width="27" height="854" fill="#333"/>
<rect x="1507" y="372" width="27" height="65" fill="#5a5a5a"/>
<path d="M1507 108.500h27M1507 163.500h27M1507 286.500h27M1507 370.500h27M1507 437.500h27M1507 558.500h27M1507 663.500h27M1507 713.500h27M1507 780.500h27" stroke="#505050" stroke-width="1.500" fill="none"/>
<text class="tab" transform="translate(1527,102) rotate(-90)" textLength="40" lengthAdjust="spacingAndGlyphs">Trade</text>
<text class="tab" transform="translate(1527,156) rotate(-90)" textLength="27" lengthAdjust="spacingAndGlyphs">T&amp;S</text>
<text class="tab" transform="translate(1527,279) rotate(-90)" textLength="95" lengthAdjust="spacingAndGlyphs">Active Trader</text>
<text class="tab" transform="translate(1527,363) rotate(-90)" textLength="54" lengthAdjust="spacingAndGlyphs">Buttons</text>
<text class="tab" transform="translate(1527,430) rotate(-90)" textLength="38" lengthAdjust="spacingAndGlyphs">Chart</text>
<text class="tab" transform="translate(1527,550) rotate(-90)" textLength="91" lengthAdjust="spacingAndGlyphs">Phase Scores</text>
<text class="tab" transform="translate(1527,655) rotate(-90)" textLength="76" lengthAdjust="spacingAndGlyphs">Dashboard</text>
<text class="tab" transform="translate(1527,706) rotate(-90)" textLength="20" lengthAdjust="spacingAndGlyphs">L 2</text>
<text class="tab" transform="translate(1527,772) rotate(-90)" textLength="37" lengthAdjust="spacingAndGlyphs">News</text>
</svg>
</body></html>
